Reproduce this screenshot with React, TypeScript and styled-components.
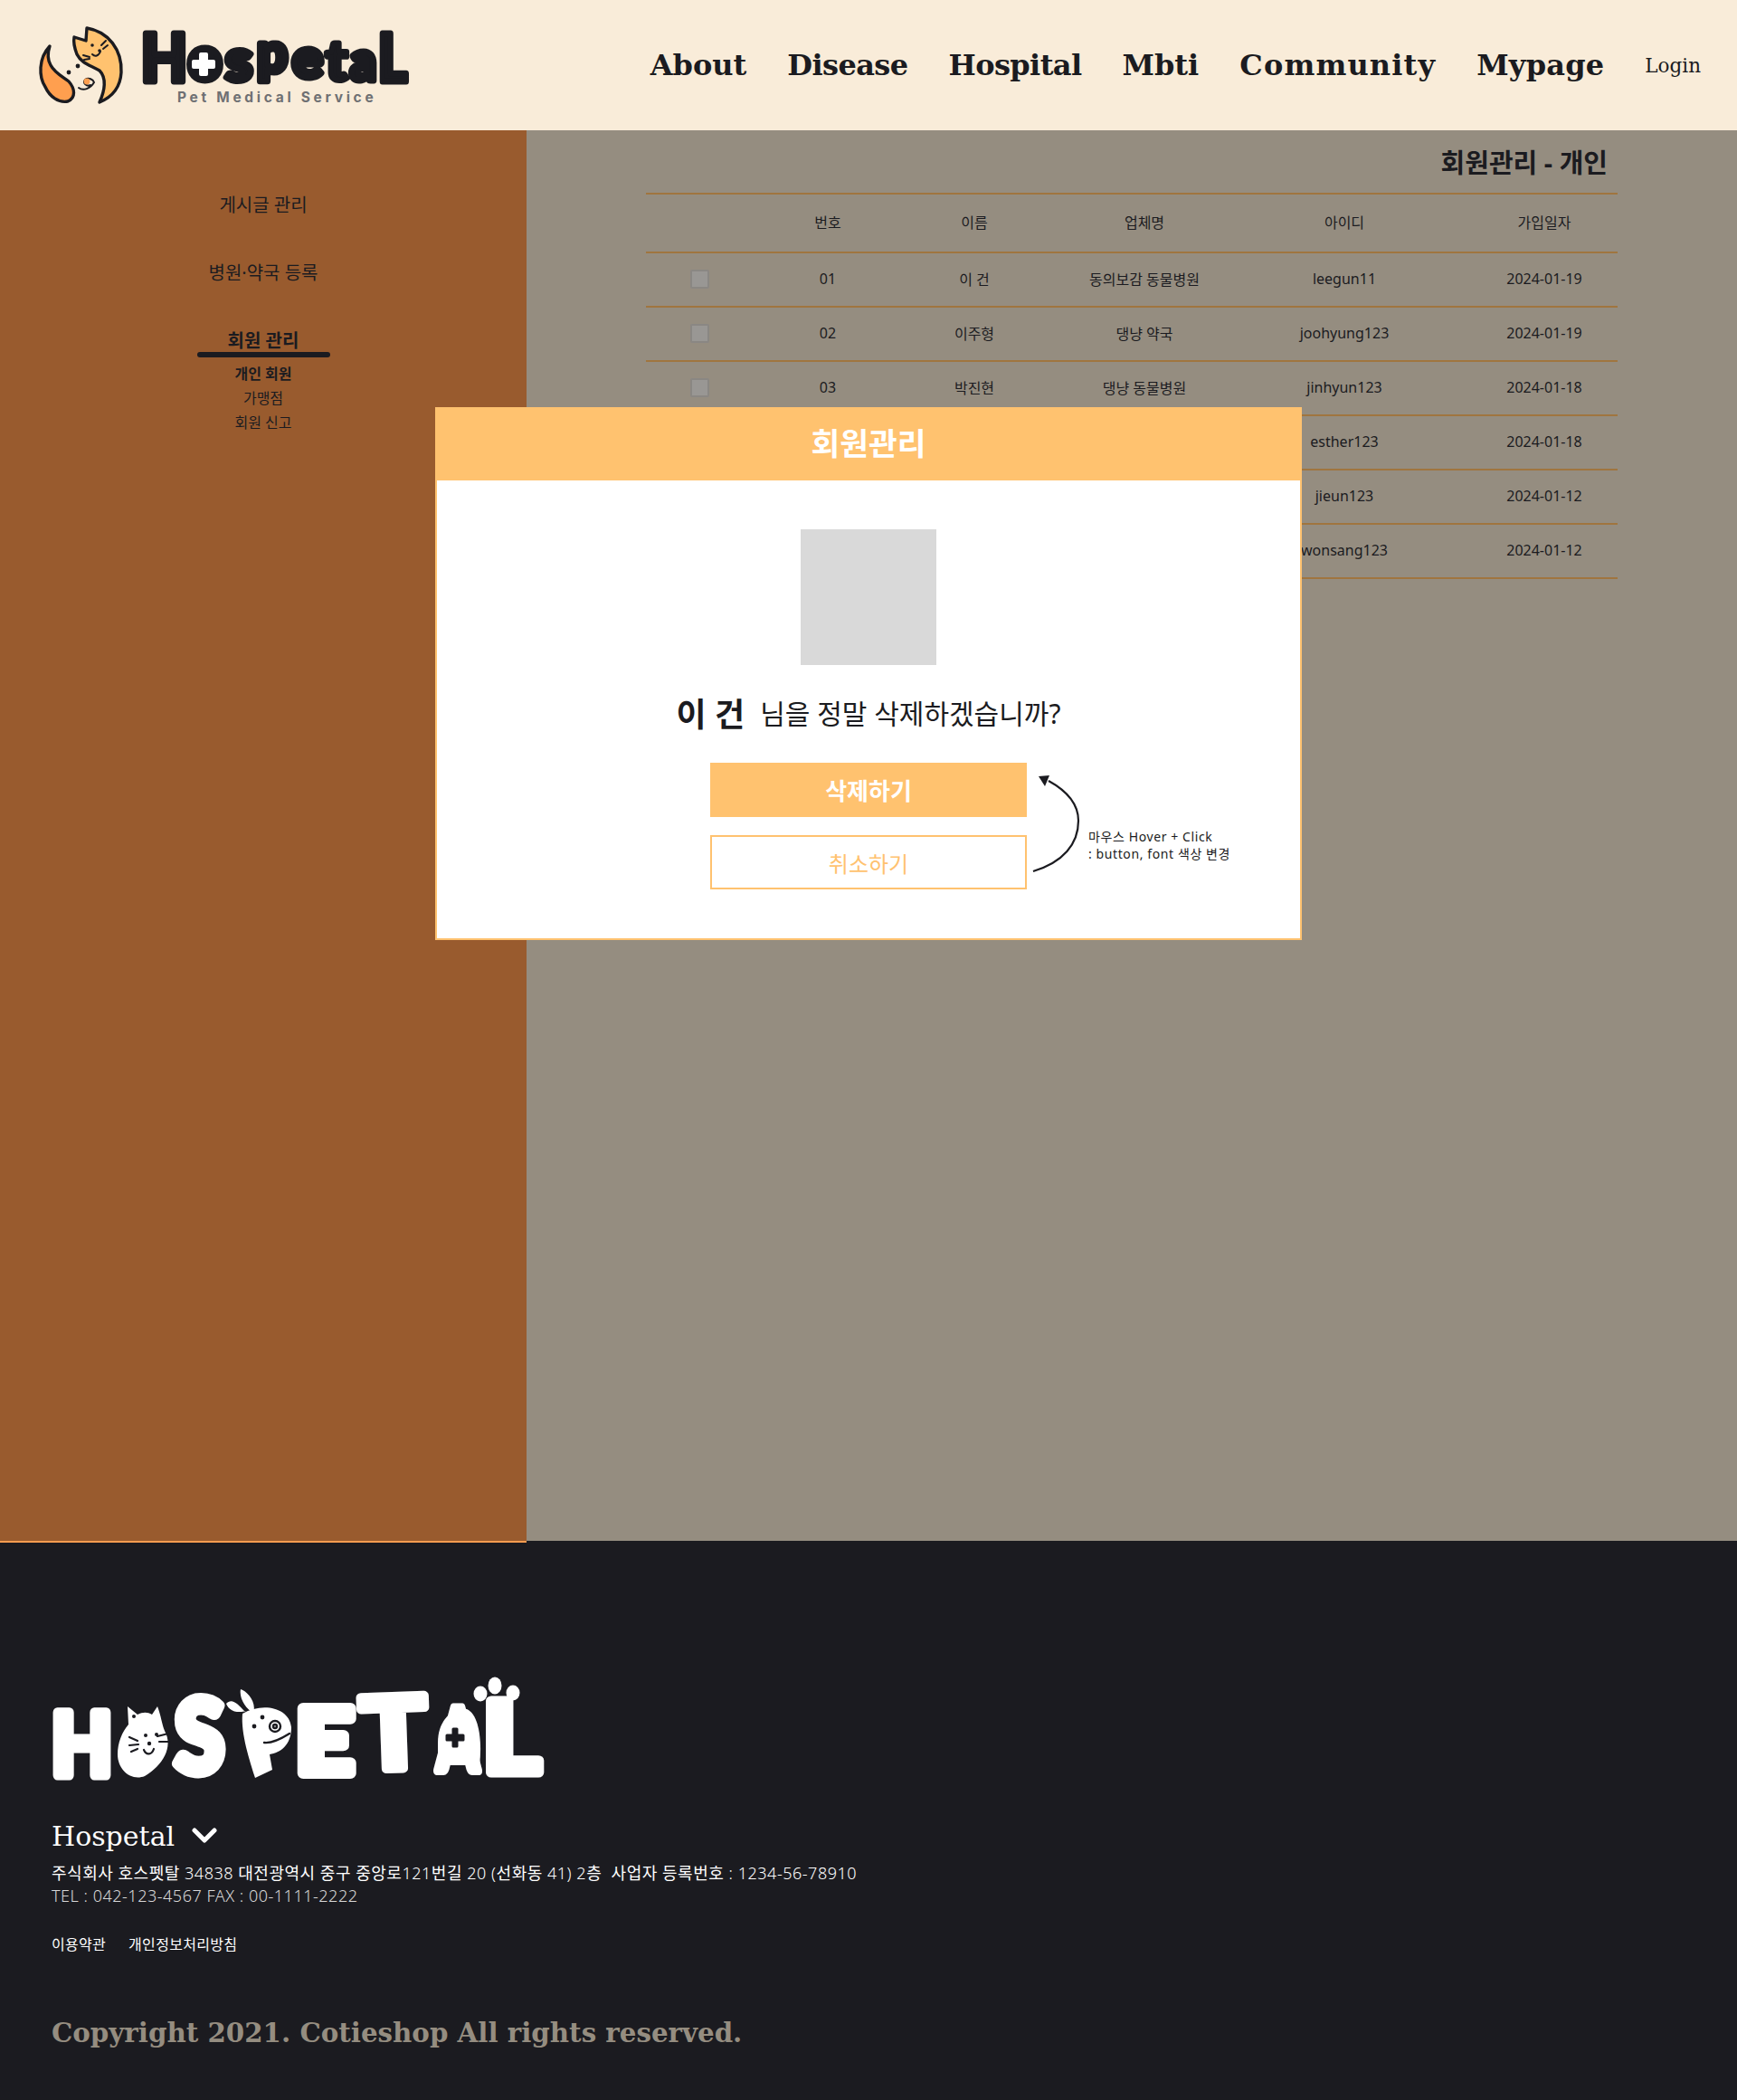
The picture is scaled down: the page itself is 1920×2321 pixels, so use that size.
import React, { useLayoutEffect, useRef } from "react";
import styled, { createGlobalStyle } from "styled-components";

const KR = `"Noto Sans", "Noto Sans CJK KR", sans-serif`;
const SERIF = `"DejaVu Serif", "Liberation Serif", serif`;
const INK = "#1b1b20";
const ORANGE = "#ffc26f";
const LINE = "#a0753f";

const Global = createGlobalStyle`
  html, body { margin: 0; padding: 0; background: #1b1b20; }
  body { font-family: ${KR}; color: ${INK}; }
  * { box-sizing: border-box; }
`;

const Page = styled.div`
  width: 1920px;
  height: 2321px;
  display: flex;
  flex-direction: column;
`;

const Header = styled.header`
  height: 144px;
  background: #f9ecd9;
  display: flex;
  align-items: center;
  justify-content: space-between;
  padding: 0 40px 0 40px;
`;

const LogoSvg = styled.svg`
  display: block;
  width: 420px;
  height: 100px;
  flex: none;
`;

const Nav = styled.nav`
  display: flex;
  align-items: center;
  gap: 45px;
`;

const NavLink = styled.a<{ $track?: number }>`
  font-family: ${SERIF};
  font-weight: 700;
  font-size: 32px;
  letter-spacing: ${(p) => p.$track ?? 0}px;
  color: ${INK};
  white-space: nowrap;
`;

const LoginLink = styled.a`
  font-family: ${SERIF};
  font-size: 21.5px;
  color: ${INK};
`;

const Body = styled.div`
  position: relative;
  height: 1559px;
  display: flex;
  background: #958d80;
`;

const Sidebar = styled.aside`
  width: 582px;
  height: 1561px;
  flex: none;
  background: #995b2e;
  border-bottom: 2px solid #fb9c50;
  position: relative;
  z-index: 1;
  display: flex;
  flex-direction: column;
  align-items: center;
  padding-top: 65px;
  gap: 45px;
`;

const SideItem = styled.div<{ $active?: boolean }>`
  font-size: 20px;
  line-height: 36px;
  height: 30px;
  font-weight: ${(p) => (p.$active ? 700 : 400)};
`;

const SideGroup = styled.div`
  display: flex;
  flex-direction: column;
  align-items: center;
`;

const ActiveBar = styled.div`
  width: 147px;
  height: 6px;
  border-radius: 3px;
  background: ${INK};
`;

const SubList = styled.div`
  display: flex;
  flex-direction: column;
  align-items: center;
  margin-top: 5px;
`;

const SubItem = styled.div<{ $active?: boolean }>`
  font-size: 16px;
  line-height: 27px;
  font-weight: ${(p) => (p.$active ? 700 : 400)};
`;

const Main = styled.main`
  flex: 1;
  padding: 0 132px;
`;

const Title = styled.h2`
  margin: 0;
  height: 69px;
  padding: 15px 11px 0 0;
  text-align: right;
  font-size: 29px;
  line-height: 42px;
  font-weight: 700;
`;

const Grid = styled.div<{ $head?: boolean }>`
  display: grid;
  grid-template-columns: 120px 162px 162px 214px 228px 188px;
  align-items: center;
  height: ${(p) => (p.$head ? 65 : 60)}px;
  padding-bottom: ${(p) => (p.$head ? 4 : 2)}px;
  border-top: 2px solid ${LINE};
  font-size: 16px;
  text-align: center;
`;

const DateCell = styled.div`
  padding-left: 26px;
  white-space: nowrap;
`;

const Table = styled.div`
  width: 1074px;
  border-bottom: 2px solid ${LINE};
`;

const CheckCell = styled.div`
  display: flex;
  justify-content: center;
  padding-right: 1px;
`;

const Check = styled.span`
  width: 21px;
  height: 21px;
  border-radius: 2px;
  background: #999794;
  border: 2px solid #8a8783;
`;

const Modal = styled.section`
  position: absolute;
  z-index: 2;
  top: 306px;
  left: 481px;
  width: 958px;
  height: 589px;
  background: #fff;
  border: 2px solid ${ORANGE};
  display: flex;
  flex-direction: column;
  align-items: center;
`;

const ModalHead = styled.div`
  align-self: stretch;
  height: 79px;
  background: ${ORANGE};
  color: #fff;
  font-size: 34.5px;
  font-weight: 700;
  text-align: center;
  line-height: 76px;
`;

const Photo = styled.div`
  width: 150px;
  height: 150px;
  margin-top: 54px;
  background: #d9d9d9;
`;

const Question = styled.p`
  margin: 27px 0 0;
  height: 50px;
  display: flex;
  align-items: center;
  gap: 17px;
  font-size: 30px;
  white-space: nowrap;
`;

const Name = styled.b`
  font-size: 36px;
  font-weight: 700;
`;

const Btn = styled.button<{ $solid?: boolean }>`
  display: block;
  width: 350px;
  height: 60px;
  padding: 0;
  font-family: ${KR};
  font-size: ${(p) => (p.$solid ? 26 : 24)}px;
  font-weight: ${(p) => (p.$solid ? 700 : 400)};
  color: ${(p) => (p.$solid ? "#fff" : ORANGE)};
  background: ${(p) => (p.$solid ? ORANGE : "#fff")};
  border: 2px solid ${ORANGE};
  border-radius: 0;
`;

const Actions = styled.div`
  position: relative;
  margin-top: 31px;
  display: flex;
  flex-direction: column;
  gap: 20px;
`;

const Arrow = styled.svg`
  position: absolute;
  left: 350px;
  top: 0;
  width: 70px;
  height: 140px;
  overflow: visible;
`;

const Note = styled.div`
  position: absolute;
  left: 418px;
  top: 72px;
  font-size: 14px;
  line-height: 19px;
  letter-spacing: 0.6px;
  white-space: nowrap;
`;

const Footer = styled.footer`
  flex: 1;
  background: ${INK};
  color: #fff;
  padding: 150px 57px 0;
`;

const FooterLogo = styled.svg`
  display: block;
  width: 560px;
  height: 125px;
  margin-bottom: 33px;
`;

const Brand = styled.div`
  display: flex;
  align-items: center;
  gap: 19px;
  height: 36px;
  font-family: ${SERIF};
  font-size: 30px;
`;

const Address = styled.div`
  margin-top: 11px;
  font-size: 18px;
  line-height: 25px;
  font-weight: 300;
  letter-spacing: 0.52px;
  white-space: pre;
`;

const Tel = styled(Address)`
  margin-top: 0;
  color: #d8d8d8;
`;

const Ko = styled.span`
  font-weight: 400;
`;

const Links = styled.div`
  display: flex;
  gap: 25px;
  margin-top: 29px;
  font-size: 16px;
  line-height: 24px;
  letter-spacing: 0.3px;
`;

const Copy = styled.div`
  margin-top: 61px;
  font-family: ${SERIF};
  font-weight: 700;
  font-size: 29.3px;
  line-height: 50px;
  color: #958d80;
`;

const FAT = `Lato, "Noto Sans", sans-serif`;

type FatProps = { x: number; y: number; w: number; size: number; stroke: number; fill: string; rot?: number; children: string };

// A heavy letter of the wordmark: real text, stretched at run time to the width the logo gives it.
function Fat(props: FatProps) {
  const ref = useRef<SVGTextElement>(null);
  useLayoutEffect(() => {
    const el = ref.current;
    if (!el) return;
    const sx = props.w / el.getComputedTextLength();
    el.setAttribute("transform", `translate(${props.x} ${props.y}) rotate(${props.rot ?? 0}) scale(${sx} 1)`);
  }, [props.x, props.y, props.w, props.rot]);
  return (
    <text
      ref={ref}
      fontFamily={FAT}
      fontWeight={900}
      fontSize={props.size}
      fill={props.fill}
      stroke={props.fill}
      strokeWidth={props.stroke}
      strokeLinejoin="round"
    >
      {props.children}
    </text>
  );
}

function HeaderLogo() {
  return (
    <LogoSvg viewBox="40 22 420 100">
      <path
        d="M55 51C42 65 43 85 50 96C55 107 65 114 75 112C84 108 83 98 76 90C68 84 60 80 56 72C52 65 53 57 55 51Z"
        fill="#ff9f4f"
        stroke={INK}
        strokeWidth="3.4"
        strokeLinejoin="round"
      />
      <path
        d="M82 41L95 45L96 31C120 35 135 55 134 80C133 98 122 108 110 113C116 100 118 86 110 78C100 72 90 70 85 60C82 52 81 46 82 41Z"
        fill={ORANGE}
        stroke={INK}
        strokeWidth="3.4"
        strokeLinejoin="round"
      />
      <g stroke={INK} strokeWidth="2" fill="none" strokeLinecap="round">
        <path d="M112 50L117 45M114 54L119 50M92 61L99 63M93 66L99 65" />
        <path d="M102 60C105 63 109 62 111 57" />
        <path d="M87 97C92 101 100 98 104 91C103 88 98 85 94 88C91 92 96 96 100 94" />
      </g>
      <circle cx="96" cy="90" r="3.4" fill="#ff9f4f" />
      <g fill={INK}>
        <circle cx="76" cy="80" r="2.4" />
        <circle cx="86" cy="73" r="2.4" />
        <circle cx="102" cy="50" r="1.8" />
        <circle cx="110" cy="56" r="1.8" />
      </g>
      <Fat x={156} y={89.5} w={51} size={72} stroke={7} fill={INK}>H</Fat>
      <Fat x={208} y={88} w={37} size={66} stroke={8} fill={INK}>o</Fat>
      <Fat x={249} y={89} w={30} size={62} stroke={7} fill={INK}>s</Fat>
      <Fat x={284} y={80} w={34} size={60} stroke={7} fill={INK}>p</Fat>
      <Fat x={323} y={86} w={34} size={60} stroke={7} fill={INK}>e</Fat>
      <Fat x={360} y={89} w={24} size={60} stroke={6} fill={INK}>t</Fat>
      <Fat x={387} y={89} w={29} size={60} stroke={7} fill={INK}>a</Fat>
      <Fat x={418} y={89.5} w={32} size={72} stroke={7} fill={INK}>L</Fat>
      <path d="M222 60h6v8h8v6h-8v8h-6v-8h-8v-6h8z" fill="#fff" stroke="#fff" strokeWidth="4" strokeLinejoin="round" />
      <text x="196" y="113" fontFamily="Inter, sans-serif" fontWeight={700} fontSize="15.5" letterSpacing="3.7" fill="#6f7073">
        Pet Medical Service
      </text>
    </LogoSvg>
  );
}

function BigLogo() {
  return (
    <FooterLogo viewBox="57 1852 560 125">
      <Fat x={57} y={1961} w={67} size={96} stroke={11} fill="#fff">H</Fat>
      <path d="M142 1905L141 1885L152 1894C158 1891 163 1891 168 1894L174 1885C178 1895 179 1905 182 1912C192 1930 180 1950 160 1962C145 1968 130 1955 130 1938C130 1925 135 1913 142 1905Z" fill="#fff" />
      <g fill="none" stroke={INK} strokeWidth="2.2" strokeLinecap="round">
        <path d="M143 1919L152 1923M143 1928L153 1927M145 1935L152 1932" />
        <path d="M159 1933C162 1940 168 1938 170 1932M174 1918L186 1915M176 1924L187 1924" />
      </g>
      <g fill={INK}>
        <circle cx="148" cy="1896" r="2" />
        <circle cx="161" cy="1917" r="2" />
        <circle cx="173" cy="1916" r="2" />
        <circle cx="165" cy="1926" r="2.2" />
      </g>
      <Fat x={193} y={1958} w={55} size={112} stroke={11} fill="#fff">S</Fat>
      <path d="M250 1882C256 1875 263 1882 270 1890L272 1890C265 1892 254 1892 250 1882ZM266 1866C273 1868 284 1880 280 1892C272 1888 264 1876 266 1866Z" fill="#fff" />
      <path d="M268 1893C290 1880 320 1886 322 1908C322 1928 310 1936 298 1938L301 1955L282 1964C276 1945 266 1915 268 1893Z" fill="#fff" />
      <g fill="none" stroke={INK} strokeWidth="2.4" strokeLinecap="round">
        <path d="M292 1925C300 1926 312 1920 320 1915" />
        <circle cx="304" cy="1907" r="6" />
        <circle cx="304" cy="1907" r="2" />
      </g>
      <circle cx="290" cy="1897" r="2.4" fill={INK} />
      <circle cx="281" cy="1907" r="2.4" fill={INK} />
      <Fat x={327} y={1959} w={64} size={100} stroke={12} fill="#fff">E</Fat>
      <Fat x={400} y={1955} w={73} size={110} stroke={10} fill="#fff" rot={-2}>T</Fat>
      <Fat x={483} y={1956} w={46} size={96} stroke={10} fill="#fff">A</Fat>
      <path d="M484 1925C484 1900 500 1886 516 1888C530 1894 533 1925 530 1950H484Z" fill="#fff" />
      <path d="M501 1910h4v7h7v5h-7v7h-4v-7h-7v-5h7z" fill={INK} strokeLinejoin="round" stroke={INK} strokeWidth="3" />
      <Fat x={534} y={1958} w={63} size={108} stroke={11} fill="#fff">L</Fat>
      <ellipse cx="531" cy="1871" rx="7.5" ry="8.5" fill="#fff" />
      <ellipse cx="547" cy="1862" rx="7.5" ry="9.5" fill="#fff" />
      <ellipse cx="567" cy="1870" rx="7.5" ry="8.5" fill="#fff" />
    </FooterLogo>
  );
}

type Row = { no: string; name: string; biz: string; id: string; date: string };
const rows: Row[] = [
  { no: "01", name: "이 건", biz: "동의보감 동물병원", id: "leegun11", date: "2024-01-19" },
  { no: "02", name: "이주형", biz: "댕냥 약국", id: "joohyung123", date: "2024-01-19" },
  { no: "03", name: "박진현", biz: "댕냥 동물병원", id: "jinhyun123", date: "2024-01-18" },
  { no: "04", name: "김에스더", biz: "댕냥 약국", id: "esther123", date: "2024-01-18" },
  { no: "05", name: "이지은", biz: "댕냥 동물병원", id: "jieun123", date: "2024-01-12" },
  { no: "06", name: "원상", biz: "댕냥 약국", id: "wonsang123", date: "2024-01-12" },
];

export default function App() {
  return (
    <Page>
      <Global />
      <Header>
        <HeaderLogo />
        <Nav>
          <NavLink>About</NavLink>
          <NavLink $track={-0.6}>Disease</NavLink>
          <NavLink $track={-0.6}>Hospital</NavLink>
          <NavLink>Mbti</NavLink>
          <NavLink $track={1.15}>Community</NavLink>
          <NavLink $track={0.2}>Mypage</NavLink>
          <LoginLink>Login</LoginLink>
        </Nav>
      </Header>
      <Body>
        <Sidebar>
          <SideItem>게시글 관리</SideItem>
          <SideItem>병원·약국 등록</SideItem>
          <SideGroup>
            <SideItem $active>회원 관리</SideItem>
            <ActiveBar />
            <SubList>
              <SubItem $active>개인 회원</SubItem>
              <SubItem>가맹점</SubItem>
              <SubItem>회원 신고</SubItem>
            </SubList>
          </SideGroup>
        </Sidebar>
        <Main>
          <Title>회원관리 - 개인</Title>
          <Table>
            <Grid $head>
              <div />
              <div>번호</div>
              <div>이름</div>
              <div>업체명</div>
              <div>아이디</div>
              <DateCell>가입일자</DateCell>
            </Grid>
            {rows.map((r) => (
              <Grid key={r.no}>
                <CheckCell><Check /></CheckCell>
                <div>{r.no}</div>
                <div>{r.name}</div>
                <div>{r.biz}</div>
                <div>{r.id}</div>
                <DateCell>{r.date}</DateCell>
              </Grid>
            ))}
          </Table>
        </Main>
        <Modal>
          <ModalHead>회원관리</ModalHead>
          <Photo />
          <Question>
            <Name>이 건</Name>
            <span>님을 정말 삭제하겠습니까?</span>
          </Question>
          <Actions>
            <Btn $solid>삭제하기</Btn>
            <Btn>취소하기</Btn>
            <Arrow viewBox="0 0 70 140">
              <path d="M7 120C40 110 57 90 57 64C57 45 44 31 24 20" fill="none" stroke={INK} strokeWidth="2.2" />
              <path d="M13 15L25 14L20 26Z" fill={INK} />
            </Arrow>
            <Note>
              마우스 Hover + Click
              <br />: button, font 색상 변경
            </Note>
          </Actions>
        </Modal>
      </Body>
      <Footer>
        <BigLogo />
        <Brand>
          Hospetal
          <svg width="28" height="20" viewBox="0 0 28 20">
            <path d="M3 4L14 15L25 4" fill="none" stroke="#fff" strokeWidth="5" strokeLinecap="round" strokeLinejoin="round" />
          </svg>
        </Brand>
        <Address>
          <Ko>주식회사 호스펫탈</Ko> 34838 <Ko>대전광역시 중구 중앙로</Ko>121<Ko>번길</Ko> 20 (<Ko>선화동</Ko> 41) 2<Ko>층  사업자 등록번호</Ko> : 1234-56-78910
        </Address>
        <Tel>TEL : 042-123-4567 FAX : 00-1111-2222</Tel>
        <Links>
          <span>이용약관</span>
          <span>개인정보처리방침</span>
        </Links>
        <Copy>Copyright 2021. Cotieshop All rights reserved.</Copy>
      </Footer>
    </Page>
  );
}
